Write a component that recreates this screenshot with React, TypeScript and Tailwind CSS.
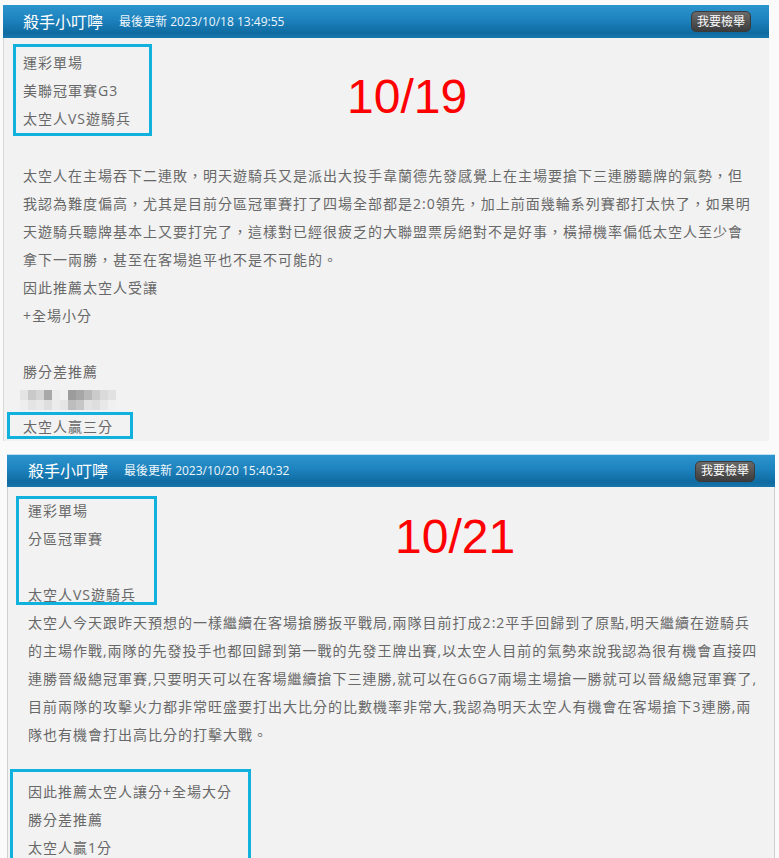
import React from 'react';

const mosaic = [
  ['#e4e4e4', '#c9c9c9', '#d4d4d4', '#a8a8a8', '#ececec', '#f0f0f0', '#9c9c9c', '#a6a6a6', '#b8b8b8', '#cbcbcb', '#dadada', '#e2e2e2'],
  ['#eeeeee', '#e4e4e4', '#e8e8e8', '#dedede', '#ebebeb', '#e5e5e5', '#bdbdbd', '#c6c6c6', '#e2e2e2', '#dedede', '#e8e8e8', '#f0f0f0'],
];

function Header({ date, first }: { date: string; first?: boolean }) {
  return (
    <div
      className={
        first
          ? 'h-[33px] flex items-center pl-[20px] bg-[linear-gradient(to_bottom,#2c95cd,#1d82bd_45%,#0f6ba1_85%,#1877ae)]'
          : 'h-[33px] flex items-center pl-[21px] border-t border-[#bfe0f0] bg-[linear-gradient(to_bottom,#2c95cd,#1d82bd_45%,#0f6ba1_85%,#1877ae)]'
      }
    >
      <span className="text-[16px] leading-none text-white">殺手小叮嚀</span>
      <span className="ml-[16px] text-[12px] leading-none text-[#eef6fb]">最後更新 {date}</span>
      <span
        className={
          first
            ? 'ml-auto mr-[18px] h-[21px] w-[60px] flex items-center justify-center rounded-[5px] border border-[#3a3a3a] bg-[linear-gradient(to_bottom,#6a6a6a,#3c3c3c)] text-[12px] text-white'
            : 'ml-auto mr-[20px] h-[21px] w-[60px] flex items-center justify-center rounded-[5px] border border-[#3a3a3a] bg-[linear-gradient(to_bottom,#6a6a6a,#3c3c3c)] text-[12px] text-white'
        }
      >
        我要檢舉
      </span>
    </div>
  );
}

export default function App() {
  return (
    <div className="min-h-[858px] bg-[#fafafa] pt-[5px] border-t-[5px] border-white -mt-[5px] font-['Open_Sans','Noto_Sans_CJK_TC',sans-serif] text-[14px] text-[#686868]">
      {/* first post */}
      <div className="ml-[3px] w-[766px]">
        <Header date="2023/10/18 13:49:55" first />
        <div className="bg-[#f2f2f2] border-l border-[#d9d9d9] pt-[6px] pb-[2px]">
          <div className="flex items-start">
            <div className="ml-[9px] w-[139px] h-[92px] border-[3px] border-[#10b1dd] pl-[7px] pt-[2px] leading-[28px] tracking-[1px] whitespace-nowrap">
              <div>運彩單場</div>
              <div>美聯冠軍賽G3</div>
              <div>太空人VS遊騎兵</div>
            </div>
            <div className="ml-[195px] mt-[29px] text-[48px] leading-[48px] text-[#ff0000] font-['Liberation_Sans',sans-serif]">
              10/19
            </div>
          </div>
          <div className="mt-[26px] pl-[19px] leading-[28px] tracking-[1px] whitespace-nowrap">
            <div>太空人在主場吞下二連敗，明天遊騎兵又是派出大投手韋蘭德先發感覺上在主場要搶下三連勝聽牌的氣勢，但</div>
            <div>我認為難度偏高，尤其是目前分區冠軍賽打了四場全部都是2:0領先，加上前面幾輪系列賽都打太快了，如果明</div>
            <div>天遊騎兵聽牌基本上又要打完了，這樣對已經很疲乏的大聯盟票房絕對不是好事，橫掃機率偏低太空人至少會</div>
            <div>拿下一兩勝，甚至在客場追平也不是不可能的。</div>
            <div>因此推薦太空人受讓</div>
            <div>+全場小分</div>
            <div className="h-[28px]" />
            <div>勝分差推薦</div>
            <div className="h-[28px] flex flex-col justify-center -ml-[3px]">
              {mosaic.map((row, i) => (
                <div key={i} className="flex">
                  {row.map((c, j) => (
                    <div key={j} className="w-[8px] h-[10px] blur-[0.5px]" style={{ background: c }} />
                  ))}
                </div>
              ))}
            </div>
          </div>
          <div className="-mt-[2px] ml-[3px] w-[126px] h-[27px] border-[3px] border-[#10b1dd] pl-[13px] pt-[1px] leading-[21px] tracking-[1px] whitespace-nowrap">
            太空人贏三分
          </div>
        </div>
      </div>

      {/* second post */}
      <div className="mt-[13px] ml-[7px] w-[768px]">
        <Header date="2023/10/20 15:40:32" />
        <div className="bg-[#f2f2f2] border-l border-r border-[#cfcfcf] pt-[9px] pb-[10px]">
          <div className="flex items-start">
            <div className="relative ml-[8px] w-[141px] h-[109px] pl-[12px] pt-[1px] leading-[28px] tracking-[1px] whitespace-nowrap">
              <div>運彩單場</div>
              <div>分區冠軍賽</div>
              <div className="h-[28px]" />
              <div>太空人VS遊騎兵</div>
              <div className="absolute inset-0 border-[3px] border-[#10b1dd]" />
            </div>
            <div className="ml-[238px] mt-[17px] text-[48px] leading-[48px] text-[#ff0000] font-['Liberation_Sans',sans-serif]">
              10/21
            </div>
          </div>
          <div className="mt-[4px] pl-[20px] leading-[28px] tracking-[1px] whitespace-nowrap">
            <div>太空人今天跟昨天預想的一樣繼續在客場搶勝扳平戰局,兩隊目前打成2:2平手回歸到了原點,明天繼續在遊騎兵</div>
            <div>的主場作戰,兩隊的先發投手也都回歸到第一戰的先發王牌出賽,以太空人目前的氣勢來說我認為很有機會直接四</div>
            <div>連勝晉級總冠軍賽,只要明天可以在客場繼續搶下三連勝,就可以在G6G7兩場主場搶一勝就可以晉級總冠軍賽了,</div>
            <div>目前兩隊的攻擊火力都非常旺盛要打出大比分的比數機率非常大,我認為明天太空人有機會在客場搶下3連勝,兩</div>
            <div>隊也有機會打出高比分的打擊大戰。</div>
          </div>
          <div className="mt-[20px] ml-[2px] w-[241px] border-[3px] border-[#10b1dd] pl-[15px] pt-[6px] pb-[10px] leading-[28px] tracking-[1px] whitespace-nowrap">
            <div>因此推薦太空人讓分+全場大分</div>
            <div>勝分差推薦</div>
            <div>太空人贏1分</div>
          </div>
        </div>
      </div>
    </div>
  );
}
